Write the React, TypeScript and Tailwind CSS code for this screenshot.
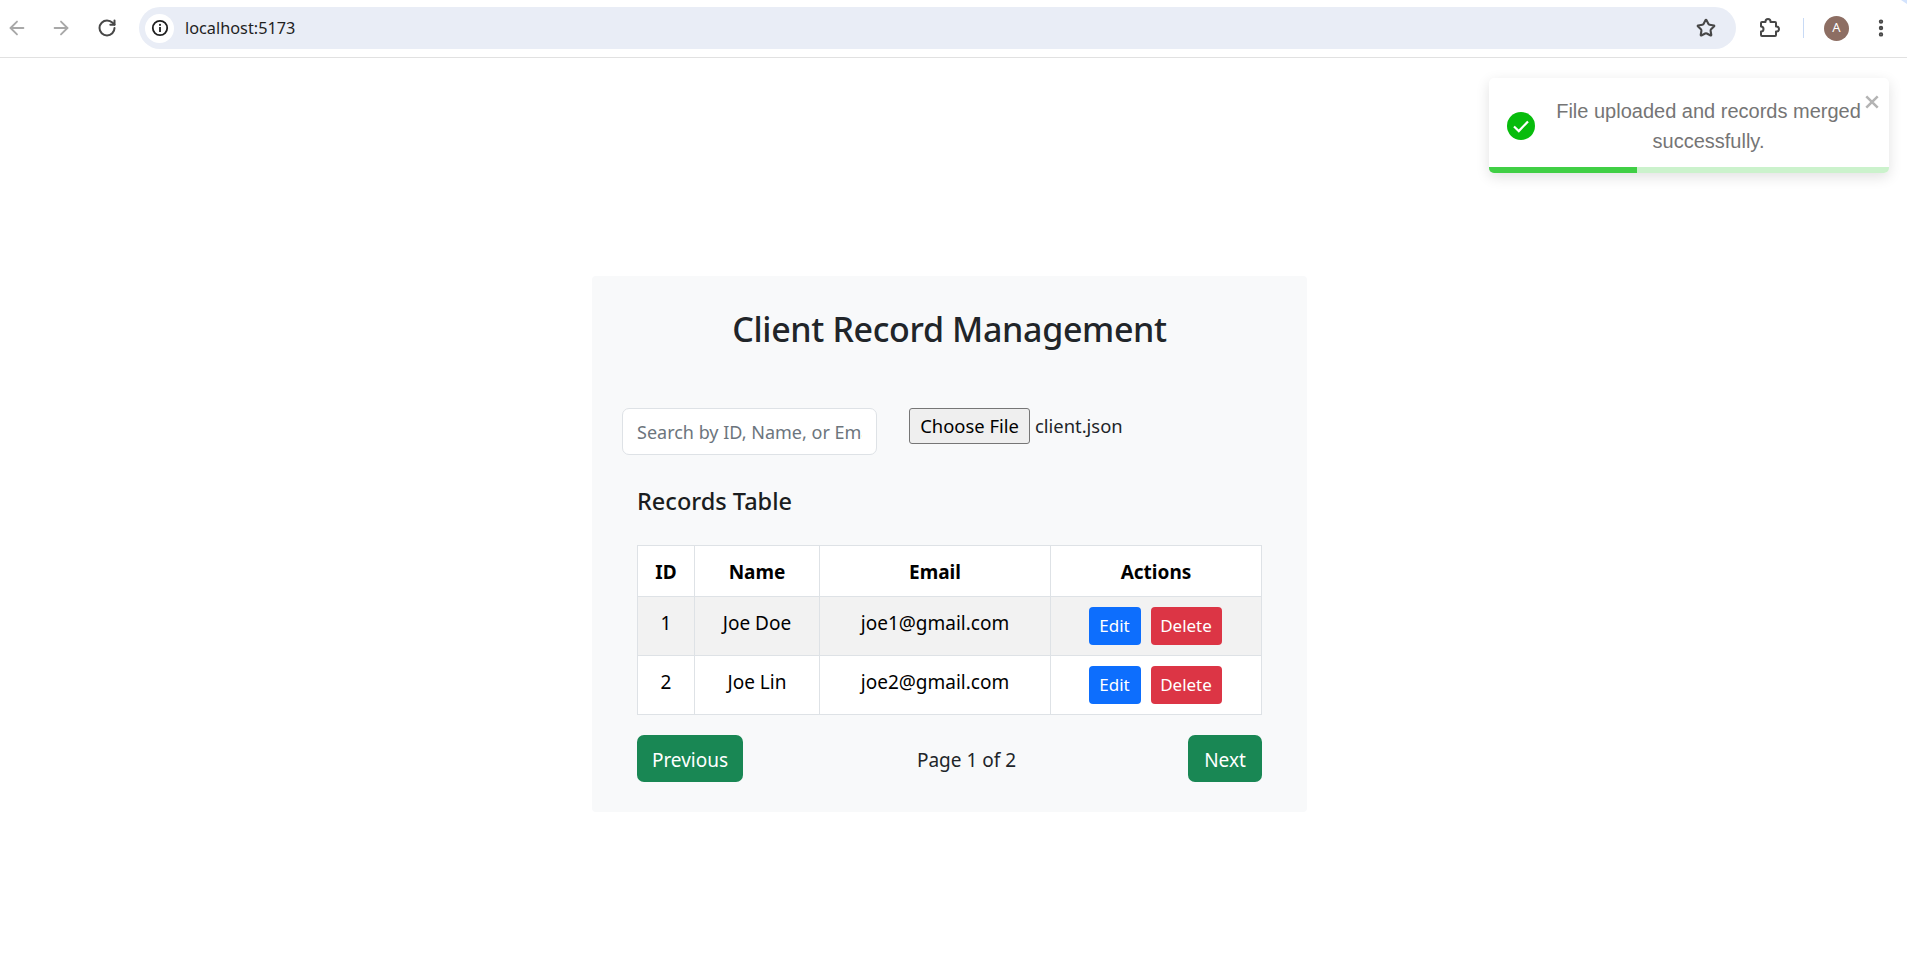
import { ArrowLeft, ArrowRight, RotateCw, Star, EllipsisVertical } from 'lucide-react'

const ROWS = [
  { id: 1, name: 'Joe Doe', email: 'joe1@gmail.com' },
  { id: 2, name: 'Joe Lin', email: 'joe2@gmail.com' },
]

function BrowserBar() {
  return (
    <div className="relative h-[58px] border-b border-[#e1e1e1] bg-white flex items-center pb-[1px]">
      <div className="w-[22px] flex justify-end"><ArrowLeft size={22} strokeWidth={2} className="text-[#a8a8a8] mr-[-6px]" /></div>
      <div className="w-[44px] flex justify-end"><ArrowRight size={22} strokeWidth={2} className="text-[#a8a8a8] mr-[-6px]" /></div>
      <div className="w-[45px] flex justify-end"><RotateCw size={20} strokeWidth={2.4} className="text-[#474747] mr-[-6px]" /></div>
      <div className="ml-[28px] w-[1597px] h-[42px] rounded-full bg-[#e9edf6] flex items-center pl-[6px] pr-[20px]">
        <div className="w-[29px] h-[29px] rounded-full bg-white flex items-center justify-center">
          <svg width="18" height="18" viewBox="0 0 18 18" fill="none">
            <circle cx="9" cy="9" r="7.2" stroke="#1f1f1f" strokeWidth="1.8" />
            <rect x="8.1" y="8" width="1.8" height="5" fill="#1f1f1f" />
            <rect x="8.1" y="4.9" width="1.8" height="1.9" fill="#1f1f1f" />
          </svg>
        </div>
        <span className="ml-[11px] text-[16.3px] text-[#1f1f1f] font-['Noto_Sans',sans-serif]">localhost:5173</span>
        <Star size={20} strokeWidth={2.5} className="ml-auto text-[#474747]" />
      </div>
      <svg className="ml-[22px]" width="22" height="22" viewBox="0 0 22 22" fill="none">
        <path d="M3 6a1 1 0 0 1 1-1h3.5v-.5a2.5 2.5 0 0 1 5 0V5H17a1 1 0 0 1 1 1v3.5h.5a2.5 2.5 0 0 1 0 5H18V18a1 1 0 0 1-1 1H4a1 1 0 0 1-1-1v-3.5a2.5 2.5 0 0 0 0-5z" stroke="#474747" strokeWidth="2" strokeLinejoin="round" />
      </svg>
      <div className="ml-[23px] w-[1px] h-[20px] bg-[#c8daf5]" />
      <div className="ml-[20px] w-[25px] h-[25px] rounded-full bg-[#8d6e63] text-white text-[13px] flex items-center justify-center font-['Noto_Sans',sans-serif]">A</div>
      <EllipsisVertical size={22} strokeWidth={2.8} className="ml-[21px] text-[#474747]" />
      {/* window corner peeking in at the top right */}
      <svg className="absolute right-0 top-0" width="6" height="4" viewBox="0 0 6 4"><path d="M0 0h6v4z" fill="#d3e3fd" /></svg>
    </div>
  )
}

function Toast() {
  return (
    <div className="absolute left-[1489px] top-[78px] w-[400px] h-[95px] bg-white rounded-[5px] shadow-[0_4px_14px_rgba(0,0,0,0.12)] overflow-hidden font-['Liberation_Sans',sans-serif]">
      <div className="h-[89px] flex items-center pl-[18px] pr-[27px] pt-[7px]">
        <svg className="shrink-0" width="28" height="28" viewBox="0 0 28 28">
          <circle cx="14" cy="14" r="14" fill="#07bc0c" />
          <path d="M7 14.5l4.8 4.6L21 9.4" fill="none" stroke="#fff" strokeWidth="2.2" />
        </svg>
        <p className="flex-1 text-center text-[20px] leading-[30px] text-[#757575] ml-[20px]">File uploaded and records merged successfully.</p>
      </div>
      <button className="absolute right-[9px] top-[16px] text-[#b4b4b4]">
        <svg width="16" height="16" viewBox="0 0 14 14"><path d="M2 2l10 10M12 2L2 12" stroke="currentColor" strokeWidth="2.2" /></svg>
      </button>
      <div className="h-[6px] bg-[#cbf2cc] flex">
        <div className="w-[148px] bg-[#40cf45]" />
      </div>
    </div>
  )
}

export default function App() {
  return (
    <div className="relative min-h-[963px] bg-white font-['Noto_Sans',sans-serif] text-[#212529]">
      <BrowserBar />
      <Toast />

      <div className="flex justify-center pr-[8px]">
        <div className="mt-[218px] w-[715px] h-[536px] bg-[#f8f9fa] rounded-[4px] px-[30px]">
          <h2 className="mt-0 pt-[30px] text-center text-[34px] leading-[46px] font-medium tracking-[-0.35px]">Client Record Management</h2>

          <div className="mt-[56px] flex items-start">
            <input
              readOnly
              placeholder="Search by ID, Name, or Email"
              className="w-[255px] h-[47px] bg-white border border-[#dee2e6] rounded-[7px] px-[14px] text-[18px] placeholder:text-[#6c757d] outline-none"
            />
            <button className="ml-[32px] w-[121px] h-[36px] bg-[#efefef] border border-[#767676] rounded-[3px] text-[18.4px] text-black">Choose File</button>
            <span className="ml-[5px] mt-[5px] text-[18.4px] leading-[26px]">client.json</span>
          </div>

          <h5 className="mt-[30px] ml-[15px] text-[23.5px] leading-[32px] font-medium text-[#1a1d20]">Records Table</h5>

          <table className="mt-[28px] ml-[15px] w-[624px] table-fixed border-collapse bg-white text-black text-[19px]">
            <colgroup>
              <col className="w-[57px]" />
              <col className="w-[125px]" />
              <col className="w-[231px]" />
              <col className="w-[211px]" />
            </colgroup>
            <thead>
              <tr className="h-[51px]">
                {['ID', 'Name', 'Email', 'Actions'].map(h => (
                  <th key={h} className="border border-[#dee2e6] text-center font-bold pt-[2px]">{h}</th>
                ))}
              </tr>
            </thead>
            <tbody>
              {ROWS.map((r, i) => (
                <tr key={r.id} className={`h-[59px] ${i === 0 ? 'bg-[#f2f2f2]' : 'bg-white'}`}>
                  <td className="border border-[#dee2e6] text-center align-top pt-[12px]">{r.id}</td>
                  <td className="border border-[#dee2e6] text-center align-top pt-[12px]">{r.name}</td>
                  <td className="border border-[#dee2e6] text-center align-top pt-[12px]">{r.email}</td>
                  <td className="border border-[#dee2e6] align-top pt-[10px]">
                    <div className="flex justify-center gap-[10px] text-[17px] text-white pr-[2px]">
                      <button className="w-[52px] h-[38px] bg-[#0d6efd] rounded-[4px]">Edit</button>
                      <button className="w-[71px] h-[38px] bg-[#dc3545] rounded-[4px]">Delete</button>
                    </div>
                  </td>
                </tr>
              ))}
            </tbody>
          </table>

          <div className="mt-[20px] ml-[15px] w-[625px] flex items-center justify-between text-[19px]">
            <button className="w-[106px] h-[47px] bg-[#198754] rounded-[7px] text-white text-[19px] pt-[3px]">Previous</button>
            <span className="ml-[2px] pt-[3px]">Page 1 of 2</span>
            <button className="w-[74px] h-[47px] bg-[#198754] rounded-[7px] text-white text-[19px] pt-[3px]">Next</button>
          </div>
        </div>
      </div>
    </div>
  )
}
